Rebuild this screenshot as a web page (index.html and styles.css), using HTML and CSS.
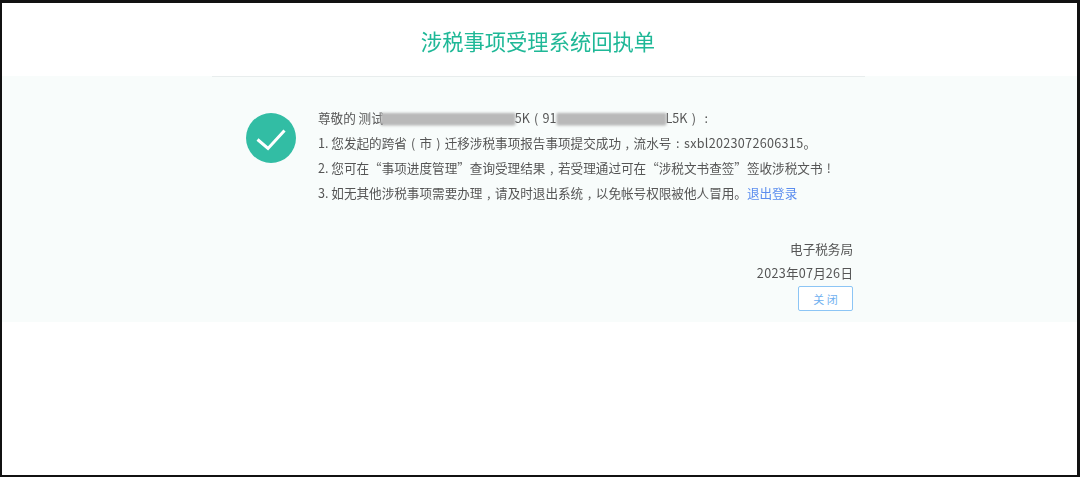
FILE: index.html
```html
<!DOCTYPE html>
<html lang="zh-CN">
<head>
  <meta charset="UTF-8" />
  <title>涉税事项受理系统回执单</title>
  <link rel="stylesheet" href="styles.css">
</head>
<body>

  <div class="frame">
    <h1 class="title">涉税事项受理系统回执单</h1>

    <div class="panel">
      <div class="rule"></div>

      <div class="receipt">
        <svg class="check" width="50" height="50" viewBox="0 0 50 50">
          <circle cx="25" cy="25" r="25" fill="#32bda4" />
          <path d="M11.5 26.5 L22 35.5 L38.5 17.5" fill="none" stroke="#fff" stroke-width="3" />
        </svg>

        <div class="lines">
          <p>尊敬的 测试<span class="blur blur-name"></span>5K<span class="mark">(</span>91<span class="blur blur-code"></span>L5K<span class="mark">)</span><span class="mark">:</span></p>
          <p>1. 您发起的跨省<span class="mark">(</span>市<span class="mark">)</span>迁移涉税事项报告事项提交成功<span class="mark">,</span>流水号<span class="mark">:</span><span class="num">sxbl2023072606315</span>。</p>
          <p>2. 您可在“事项进度管理”查询受理结果<span class="mark">,</span>若受理通过可在“涉税文书查签”签收涉税文书<span class="mark">!</span></p>
          <p>3. 如无其他涉税事项需要办理<span class="mark">,</span>请及时退出系统<span class="mark">,</span>以免帐号权限被他人冒用。<a class="logout" href="#">退出登录</a></p>
        </div>
      </div>

      <div class="sign">
        <div class="sign-org">电子税务局</div>
        <div class="sign-date"><span class="num">2023</span>年<span class="num">07</span>月<span class="num">26</span>日</div>
        <button class="close">关 闭</button>
      </div>
    </div>
  </div>

</body>
</html>
```

FILE: styles.css
```css
html, body {
  height: 100%;
}

body {
  margin: 0;
  font-family: "Noto Sans CJK SC", "Open Sans", sans-serif;
  color: #555;
  background: #fff;
}

.frame {
  box-sizing: border-box;
  height: 477px;
  border: solid #111;
  border-width: 3px 3px 2px 2px;
  overflow: hidden;
}

.title {
  margin: 0;
  height: 73px;
  padding-right: 3px;
  font-size: 21.3px;
  font-weight: 400;
  line-height: 76px;
  text-align: center;
  color: #1fb897;
  filter: blur(0.3px);
}

.panel {
  height: 246px;
  background: #f8fcfb;
}

.rule {
  width: 653px;
  height: 1px;
  margin-left: 210px;
  background: #e8eded;
}

.receipt {
  display: flex;
  gap: 22px;
  padding: 28px 0 0 244px;
}

.check {
  flex: none;
  margin-top: 8px;
}

.lines p {
  margin: 0;
  height: 25px;
  font-size: 12.6px;
  line-height: 25px;
  white-space: nowrap;
  filter: blur(0.3px);
}

/* punctuation sits centred in a full-width cell in the original font */
.mark {
  display: inline-block;
  width: 1em;
  text-align: center;
}

.num {
  letter-spacing: 0.3px;
}

.blur {
  display: inline-block;
  height: 11px;
  vertical-align: -1px;
  background: #b9b9b9;
  box-shadow: 0 1px 2px #999;
  filter: blur(1px);
}

.blur-name {
  width: 134px;
  margin-left: -3px;
}

.blur-code {
  width: 109px;
}

.logout {
  color: #5b8def;
  text-decoration: none;
}

.sign {
  display: flex;
  flex-direction: column;
  align-items: flex-end;
  width: 851px;
  margin-top: 32px;
  font-size: 12.6px;
}

.sign-org,
.sign-date {
  height: 24px;
  line-height: 24px;
  filter: blur(0.3px);
}

.close {
  box-sizing: border-box;
  width: 55px;
  height: 25px;
  margin-top: 1px;
  padding: 0;
  font-family: inherit;
  font-size: 11px;
  color: #6fb0f0;
  background: #fff;
  border: 1px solid #8cc5f5;
  border-radius: 2px;
}
```
